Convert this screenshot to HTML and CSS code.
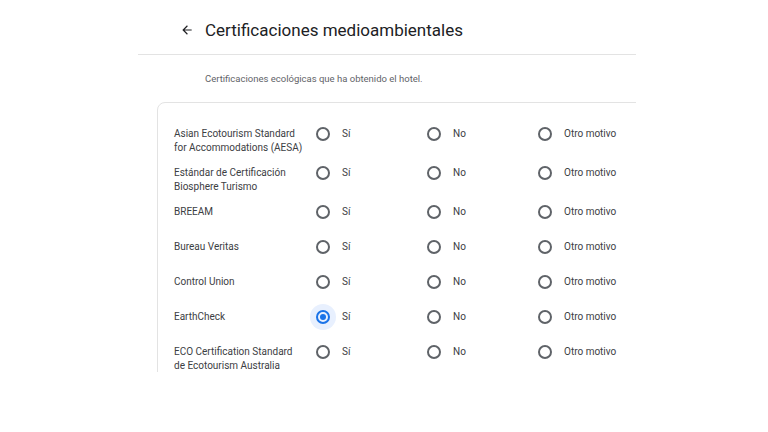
FILE: index.html
```html
<!DOCTYPE html>
<html lang="es">
<head>
    <meta charset="UTF-8">
    <meta name="viewport" content="width=device-width, initial-scale=1.0">
    <title>Certificaciones medioambientales</title>
    <link rel="stylesheet" href="styles.css">
</head>
<body>
    <div class="panel">
        <div class="header">
            <svg class="back" width="14" height="14" viewBox="0 0 24 24">
                <path d="M20 11H7.83l5.59-5.59L12 4l-8 8 8 8 1.41-1.41L7.83 13H20v-2z" fill="#202124"/>
            </svg>
            <h1>Certificaciones medioambientales</h1>
        </div>

        <p class="subtitle">Certificaciones ecológicas que ha obtenido el hotel.</p>

        <div class="card">
            <div class="row">
                <span class="label">Asian Ecotourism Standard for Accommodations (AESA)</span>
                <span class="option"><span class="radio"></span>Sí</span>
                <span class="option"><span class="radio"></span>No</span>
                <span class="option"><span class="radio"></span>Otro motivo</span>
            </div>
            <div class="row">
                <span class="label">Estándar de Certificación Biosphere Turismo</span>
                <span class="option"><span class="radio"></span>Sí</span>
                <span class="option"><span class="radio"></span>No</span>
                <span class="option"><span class="radio"></span>Otro motivo</span>
            </div>
            <div class="row">
                <span class="label">BREEAM</span>
                <span class="option"><span class="radio"></span>Sí</span>
                <span class="option"><span class="radio"></span>No</span>
                <span class="option"><span class="radio"></span>Otro motivo</span>
            </div>
            <div class="row">
                <span class="label">Bureau Veritas</span>
                <span class="option"><span class="radio"></span>Sí</span>
                <span class="option"><span class="radio"></span>No</span>
                <span class="option"><span class="radio"></span>Otro motivo</span>
            </div>
            <div class="row">
                <span class="label">Control Union</span>
                <span class="option"><span class="radio"></span>Sí</span>
                <span class="option"><span class="radio"></span>No</span>
                <span class="option"><span class="radio"></span>Otro motivo</span>
            </div>
            <div class="row">
                <span class="label">EarthCheck</span>
                <span class="option"><span class="radio checked"></span>Sí</span>
                <span class="option"><span class="radio"></span>No</span>
                <span class="option"><span class="radio"></span>Otro motivo</span>
            </div>
            <div class="row">
                <span class="label">ECO Certification Standard de Ecotourism Australia</span>
                <span class="option"><span class="radio"></span>Sí</span>
                <span class="option"><span class="radio"></span>No</span>
                <span class="option"><span class="radio"></span>Otro motivo</span>
            </div>
        </div>
    </div>
</body>
</html>
```

FILE: styles.css
```css
body {
    margin: 0;
    background-color: #ffffff;
    font-family: Roboto, "Liberation Sans", Arial, sans-serif;
    color: #3c4043;
}

.panel {
    margin-left: 138px;
    width: 498px;
    height: 372px;
    overflow: hidden;
}

.header {
    display: flex;
    align-items: center;
    height: 55px;
    border-bottom: 1px solid #e3e3e3;
    box-sizing: border-box;
    padding-left: 42px;
    padding-top: 5px;
}

.back {
    margin-right: 11px;
}

.header h1 {
    margin: 0;
    font-size: 17px;
    font-weight: 400;
    color: #202124;
}

.subtitle {
    margin: 17px 0 0 67px;
    font-size: 9.5px;
    line-height: 14px;
    color: #5f6368;
}

.card {
    margin: 16px 0 0 19px;
    width: 600px;
    height: 400px;
    border: 1px solid #e3e3e3;
    border-radius: 8px;
    box-sizing: border-box;
    padding: 24px 0 0 16px;
}

.row {
    display: grid;
    grid-template-columns: 142px 111px 111px 111px;
    align-items: start;
    min-height: 24px;
    margin-bottom: 11px;
    font-size: 10px;
    line-height: 14px;
}

.label {
    width: 130px;
}

.option {
    display: flex;
    align-items: center;
    height: 14px;
}

.radio {
    position: relative;
    width: 10px;
    height: 10px;
    border: 2px solid #5f6368;
    border-radius: 50%;
    margin-right: 12px;
    flex-shrink: 0;
}

.radio.checked {
    border-color: #1a73e8;
}

.radio.checked::before {
    content: "";
    position: absolute;
    left: -8px;
    top: -8px;
    width: 26px;
    height: 26px;
    border-radius: 50%;
    background-color: #e8f0fe;
    z-index: -1;
}

.radio.checked::after {
    content: "";
    position: absolute;
    left: 2px;
    top: 2px;
    width: 6px;
    height: 6px;
    border-radius: 50%;
    background-color: #1a73e8;
}
```
